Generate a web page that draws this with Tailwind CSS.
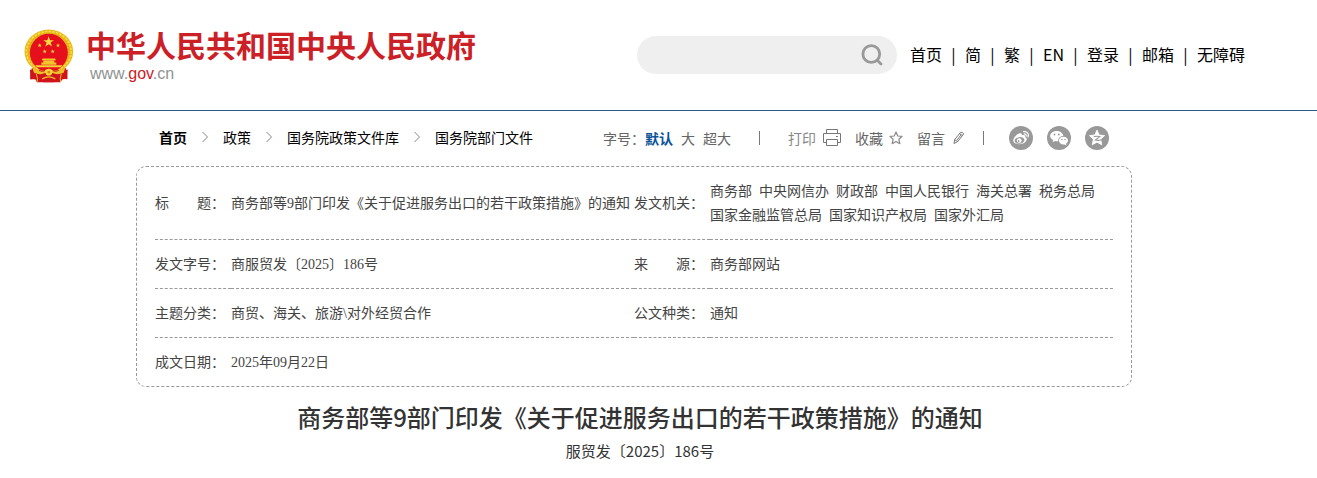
<!DOCTYPE html>
<html lang="zh-CN">
<head>
  <meta charset="UTF-8">
  <meta name="viewport" content="width=device-width, initial-scale=1.0">
  <title>商务部等9部门印发《关于促进服务出口的若干政策措施》的通知</title>
  <script src="https://cdn.jsdelivr.net/npm/@tailwindcss/browser@4"></script>
</head>
<body class="bg-white text-black font-['Noto_Sans_CJK_SC',sans-serif]">
  <!-- Header -->
  <header class="flex items-center justify-between h-[111px] pl-6 pr-[72px] border-b border-[#2a5a88]">
    <a href="#" class="flex items-center gap-3 whitespace-nowrap">
      <svg class="w-[50px] h-[54px] shrink-0" viewBox="41 26 150 161" overflow="visible" aria-hidden="true">
        <path d="M64 146 L60 178 L76 180 L80 188 H150 L155 180 L171 177 L167 146 Z" fill="#d0141c"/>
        <ellipse cx="115.500" cy="96" rx="73" ry="66" fill="#e9b91c"/>
        <ellipse cx="115.500" cy="96" rx="67" ry="60" fill="none" stroke="#f7dc43" stroke-width="5" stroke-dasharray="7 4"/>
        <ellipse cx="115.500" cy="96" rx="60" ry="55" fill="none" stroke="#c98a12" stroke-width="2" stroke-dasharray="3 6"/>
        <path d="M59 150 L84 158 L104 172 L80 188 L76 178 L60 180 Z M172 150 L147 158 L127 172 L151 188 L155 178 L171 179 Z" fill="#d0141c"/>
        <circle cx="115.500" cy="100" r="57" fill="#e60f1c"/>
        <path d="M115 50 L119 62 L131 62 L121 69 L125 81 L115 74 L105 81 L109 69 L99 62 L111 62 Z" fill="#fbdc3e"/>
        <g fill="#fbdc3e">
          <path id="s" d="M88 71 L89.600 75.500 H94 L90.500 78.500 L92 83 L88 80.300 L84 83 L85.500 78.500 L82 75.500 H86.400 Z"/>
          <use href="#s" x="55"/>
          <use href="#s" x="15" y="18"/>
          <use href="#s" x="39" y="18"/>
        </g>
        <path d="M97 117 H134 L137 122 H94 Z M99 123 H132 V129 H99 Z M93 129 H138 V136 H93 Z" fill="#f2c52c"/>
        <path d="M74 137 H157 L151 143 H80 Z" fill="#f7d53a"/>
        <path d="M66 145 Q90 160 106 151 H125 Q141 160 165 145 L160 160 Q140 168 126 160 H105 Q91 168 71 160 Z" fill="#efc02a"/>
        <path d="M86 153 Q98 158 104 153 M127 153 Q133 158 145 153" fill="none" stroke="#d0141c" stroke-width="3"/>
        <circle cx="115.500" cy="158" r="10" fill="#f7d53a"/>
        <circle cx="115.500" cy="158" r="4" fill="#dc8a16"/>
        <path d="M78 163 Q84 180 80 188 M153 163 Q147 180 151 188" fill="none" stroke="#efc02a" stroke-width="3"/>
        <path d="M94 180 Q115 166 137 180 L132 188 H99 Z" fill="#d0141c"/>
        <path d="M96 178 Q115 166 135 178" fill="none" stroke="#efc02a" stroke-width="4"/>
      </svg>
      <span class="flex flex-col pt-0.5">
        <span class="text-[30px] leading-9 font-bold text-[#cb2026]">中华人民共和国中央人民政府</span>
        <span class="pl-1 text-base leading-6 text-[#8f9291] font-['Liberation_Sans',sans-serif]">www.<span class="text-[#cb2026]">gov</span>.cn</span>
      </span>
    </a>
    <div class="flex items-center gap-[13px]">
      <form class="flex items-center w-[260px] h-[38px] pl-4 pr-[14px] rounded-full bg-[#efefef]">
        <input type="search" aria-label="搜索" class="flex-1 min-w-0 bg-transparent text-base outline-none">
        <button type="submit" aria-label="搜索">
          <svg class="block size-[22px]" viewBox="0 0 22 22" fill="none" stroke="#999" stroke-width="2.8" stroke-linecap="round">
            <circle cx="10.300" cy="10" r="8.400"/>
            <path d="M16.500 16.500 L20 20"/>
          </svg>
        </button>
      </form>
      <nav class="flex items-center pb-0.5 text-base whitespace-nowrap">
        <a href="#">首页</a><span class="w-[23px] text-center">|</span>
        <a href="#">简</a><span class="w-[23px] text-center">|</span>
        <a href="#">繁</a><span class="w-[23px] text-center">|</span>
        <a href="#">EN</a><span class="w-[23px] text-center">|</span>
        <a href="#">登录</a><span class="w-[23px] text-center">|</span>
        <a href="#">邮箱</a><span class="w-[23px] text-center">|</span>
        <a href="#">无障碍</a>
      </nav>
    </div>
  </header>

  <main class="pl-[136px] pr-[185px]">
    <!-- Breadcrumb and page tools -->
    <div class="flex items-center justify-between h-[55px] px-[23px] pb-0.5 text-sm whitespace-nowrap">
      <nav class="flex items-center gap-[14px] pb-0.5" aria-label="当前位置">
        <a href="#" class="font-bold">首页</a>
        <svg class="w-2 h-3" viewBox="0 0 8 12" fill="none" stroke="#888"><path d="M1.500 1 L6.500 6 L1.500 11"/></svg>
        <a href="#">政策</a>
        <svg class="w-2 h-3" viewBox="0 0 8 12" fill="none" stroke="#888"><path d="M1.500 1 L6.500 6 L1.500 11"/></svg>
        <a href="#">国务院政策文件库</a>
        <svg class="w-2 h-3" viewBox="0 0 8 12" fill="none" stroke="#888"><path d="M1.500 1 L6.500 6 L1.500 11"/></svg>
        <a href="#">国务院部门文件</a>
      </nav>
      <div class="flex items-center text-[#666]">
        <span>字号：</span>
        <button type="button" class="font-bold text-[#0b5299]">默认</button>
        <button type="button" class="ml-2">大</button>
        <button type="button" class="ml-2">超大</button>
        <span class="w-px h-[14px] mx-7 bg-[#777]"></span>
        <button type="button" class="flex items-center gap-[7px] text-[#888]">打印
          <svg class="w-[18px] h-[17px]" viewBox="0 0 18 17" fill="none" stroke="#777">
            <path d="M3.500 4.500 V0.500 H14.500 V4.500 M3.500 13.500 H0.500 V4.500 H17.500 V13.500 H14.500 M3.500 10.500 H14.500 V16.500 H3.500 Z M13 7.500 H15"/>
          </svg>
        </button>
        <button type="button" class="flex items-center gap-[6px] ml-[14px]">收藏
          <svg class="size-[14px]" viewBox="0 0 14 14" fill="none" stroke="#888" stroke-width="1.200" stroke-linejoin="round">
            <path d="M7 1 L8.800 5 L13 5.400 L9.900 8.300 L10.800 12.700 L7 10.400 L3.200 12.700 L4.100 8.300 L1 5.400 L5.200 5 Z"/>
          </svg>
        </button>
        <button type="button" class="flex items-center gap-[7px] ml-[14px]">留言
          <svg class="size-[14px]" viewBox="0 0 14 14" fill="none" stroke="#777" stroke-linejoin="round">
            <path d="M2 12.500 L2.600 8.700 L8.500 1.500 Q10 0.700 11.800 2.800 L5.800 10.500 Z M2.600 8.700 L5.800 10.500 M7.600 2.800 L10.600 4.500 M9 4 L5 9"/>
          </svg>
        </button>
        <span class="w-px h-[14px] ml-[17px] mr-[25px] bg-[#777]"></span>
        <div class="flex gap-[14px]">
          <a href="#" aria-label="微博">
            <svg class="block size-6" viewBox="0 0 24 24">
              <circle cx="12" cy="12" r="12" fill="#999"/>
              <path d="M10 7.500 C12 6.800 13.200 7.400 12.700 9.300 C14.800 8.600 16.600 9 15.900 11.100 C18 11.800 18.200 13.500 17 15.200 C14.500 19.200 4.500 19.500 4.200 14.600 C4.100 12 7.200 8.500 10 7.500 Z" fill="#fff"/>
              <ellipse cx="10.500" cy="14.400" rx="4.900" ry="3.300" fill="#999" transform="rotate(-8 10.500 14.400)"/>
              <circle cx="10.200" cy="14.600" r="2.400" fill="#fff"/>
              <circle cx="9.600" cy="15" r="0.900" fill="#999"/>
              <path d="M14.500 5.700 C18 5 20.300 8 19 11 M15.200 8 C16.700 7.800 17.600 9 17.100 10.200" fill="none" stroke="#fff" stroke-width="1.200" stroke-linecap="round"/>
            </svg>
          </a>
          <a href="#" aria-label="微信">
            <svg class="block size-6" viewBox="0 0 24 24">
              <circle cx="12" cy="12" r="12" fill="#999"/>
              <path d="M9.700 5 C13.300 5 16 7.200 16.300 10 C13 10 10.800 12.300 11.300 15.200 C10.200 15.400 9 15.300 8 15 L5.500 16.300 L6.200 14 C4.300 12.900 3.200 11.500 3.200 9.900 C3.200 7.200 6 5 9.700 5 Z" fill="#fff"/>
              <path d="M16.300 10.800 C19 10.800 21 12.500 21 14.600 C21 15.900 20.200 17 19 17.800 L19.500 19.600 L17.500 18.500 C14.300 19 11.900 17 11.900 14.600 C11.900 12.500 13.800 10.800 16.300 10.800 Z" fill="#fff"/>
              <g fill="#999">
                <circle cx="7.500" cy="8.500" r="0.900"/><circle cx="11.800" cy="8.500" r="0.900"/>
                <circle cx="14.900" cy="13.500" r="0.700"/><circle cx="18" cy="13.500" r="0.700"/>
              </g>
            </svg>
          </a>
          <a href="#" aria-label="QQ空间">
            <svg class="block size-6" viewBox="0 0 24 24">
              <circle cx="12" cy="12" r="12" fill="#999"/>
              <path d="M12 4 L14.200 9 L19.600 9.600 L15.600 13.200 L16.800 18.800 L12 16.200 L7.200 18.800 L8.400 13.200 L4.400 9.600 L9.800 9 Z" fill="#fff" stroke="#fff" stroke-width="0.800" stroke-linejoin="round"/>
              <path d="M8.800 10.600 Q12 9.900 14.800 10.600 L10.300 14 Q13.500 14.800 16 14" fill="none" stroke="#999" stroke-width="1.100"/>
            </svg>
          </a>
        </div>
      </div>
    </div>

    <!-- Document details -->
    <section class="px-[18px] border border-dashed border-[#999] rounded-[10px]">
      <table class="w-full table-fixed border-separate border-spacing-0 text-left text-sm leading-6 text-[#444] font-['Liberation_Serif','Noto_Sans_CJK_SC',serif]">
        <colgroup>
          <col class="w-[76px]">
          <col>
          <col class="w-[76px]">
          <col>
        </colgroup>
        <tbody>
          <tr>
            <th scope="row" class="pt-[13px] pb-[11px] font-normal whitespace-nowrap border-b border-dashed border-[#999]">标　　题：</th>
            <td class="pt-[13px] pb-[11px] border-b border-dashed border-[#999]">商务部等9部门印发《关于促进服务出口的若干政策措施》的通知</td>
            <th scope="row" class="pt-[13px] pb-[11px] font-normal whitespace-nowrap border-b border-dashed border-[#999]">发文机关：</th>
            <td class="pt-[13px] pb-[11px] border-b border-dashed border-[#999]">
              <div class="flex flex-wrap gap-x-[7px]">
                <span>商务部</span><span>中央网信办</span><span>财政部</span><span>中国人民银行</span><span>海关总署</span><span>税务总局</span>
                <span>国家金融监管总局</span><span>国家知识产权局</span><span>国家外汇局</span>
              </div>
            </td>
          </tr>
          <tr>
            <th scope="row" class="pt-[13px] pb-[11px] font-normal whitespace-nowrap border-b border-dashed border-[#999]">发文字号：</th>
            <td class="pt-[13px] pb-[11px] border-b border-dashed border-[#999]">商服贸发〔2025〕186号</td>
            <th scope="row" class="pt-[13px] pb-[11px] font-normal whitespace-nowrap border-b border-dashed border-[#999]">来　　源：</th>
            <td class="pt-[13px] pb-[11px] border-b border-dashed border-[#999]">商务部网站</td>
          </tr>
          <tr>
            <th scope="row" class="pt-[13px] pb-[11px] font-normal whitespace-nowrap border-b border-dashed border-[#999]">主题分类：</th>
            <td class="pt-[13px] pb-[11px] border-b border-dashed border-[#999]">商贸、海关、旅游\对外经贸合作</td>
            <th scope="row" class="pt-[13px] pb-[11px] font-normal whitespace-nowrap border-b border-dashed border-[#999]">公文种类：</th>
            <td class="pt-[13px] pb-[11px] border-b border-dashed border-[#999]">通知</td>
          </tr>
          <tr>
            <th scope="row" class="pt-[13px] pb-[11px] font-normal whitespace-nowrap">成文日期：</th>
            <td class="pt-[13px] pb-[11px]" colspan="3">2025年09月22日</td>
          </tr>
        </tbody>
      </table>
    </section>

    <!-- Title -->
    <div class="flex flex-col gap-0.5 pt-[10px] pl-3 text-center text-[#333]">
      <h1 class="text-2xl leading-10 font-medium">商务部等9部门印发《关于促进服务出口的若干政策措施》的通知</h1>
      <p class="text-[15px] leading-6">服贸发〔2025〕186号</p>
    </div>
  </main>
</body>
</html>
